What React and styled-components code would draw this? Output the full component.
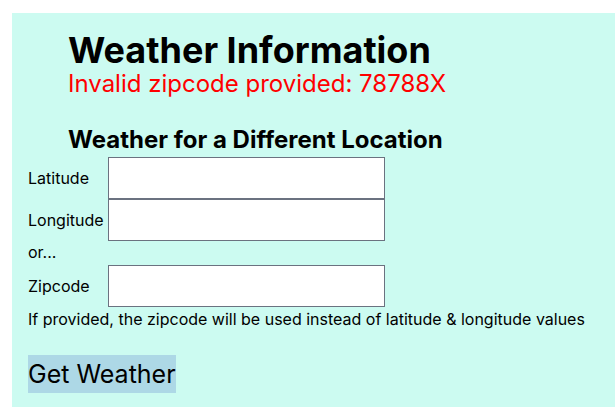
import React from 'react';
import styled, { createGlobalStyle } from 'styled-components';

const GlobalStyle = createGlobalStyle`
  html, body {
    margin: 0;
    padding: 0;
    background: #ffffff;
  }
  body {
    font-family: Inter, "Noto Sans", sans-serif;
    color: #000000;
  }
`

const WeatherForm = () => {
  return (
    <Page>
      <Header>
        <Title>Weather Information</Title>
        <ErrorText>Invalid zipcode provided: 78788X</ErrorText>
        <Subtitle>Weather for a Different Location</Subtitle>
      </Header>
      <FieldGrid>
        <Label htmlFor="lat">Latitude</Label>
        <Input id="lat" type="text" />
        <Label htmlFor="lon">Longitude</Label>
        <Input id="lon" type="text" />
      </FieldGrid>
      <Or>or...</Or>
      <FieldGrid>
        <Label htmlFor="zip">Zipcode</Label>
        <Input id="zip" type="text" />
      </FieldGrid>
      <Hint>If provided, the zipcode will be used instead of latitude &amp; longitude values</Hint>
      <Button type="button">Get Weather</Button>
    </Page>
  )
}

export default function App() {
  return (
    <>
      <GlobalStyle />
      <WeatherForm />
    </>
  )
}

const Page = styled.div`
  margin: 13px 0 0 12px;
  padding: 17px 16px 0 16px;
  min-height: calc(100vh - 13px);
  box-sizing: border-box;
  background: #ccfbf1;
`

const Header = styled.div`
  padding-left: 40px;
`

const Title = styled.h1`
  margin: 0;
  font-size: 36px;
  line-height: 40px;
  font-weight: 700;
`

const ErrorText = styled.div`
  margin-top: 0;
  font-size: 24px;
  line-height: 28px;
  color: #ff0000;
`

const Subtitle = styled.h2`
  margin: 28px 0 3px;
  font-size: 24px;
  line-height: 28px;
  font-weight: 700;
`

const FieldGrid = styled.div`
  display: grid;
  grid-template-columns: 80px 277px;
  align-items: center;
`

const Label = styled.label`
  font-size: 16px;
`

const Input = styled.input`
  box-sizing: border-box;
  width: 277px;
  height: 42px;
  margin: 0;
  border: 1px solid #6b7280;
  background: #ffffff;
  font-family: inherit;
`

const Or = styled.div`
  margin: 1px 0 3px;
  font-size: 16px;
`

const Hint = styled.div`
  margin-top: 2px;
  font-size: 16px;
`

const Button = styled.button`
  margin-top: 26px;
  padding: 4px 0;
  border: none;
  background: #add8e6;
  font-family: inherit;
  font-size: 25px;
  color: #000000;
`
